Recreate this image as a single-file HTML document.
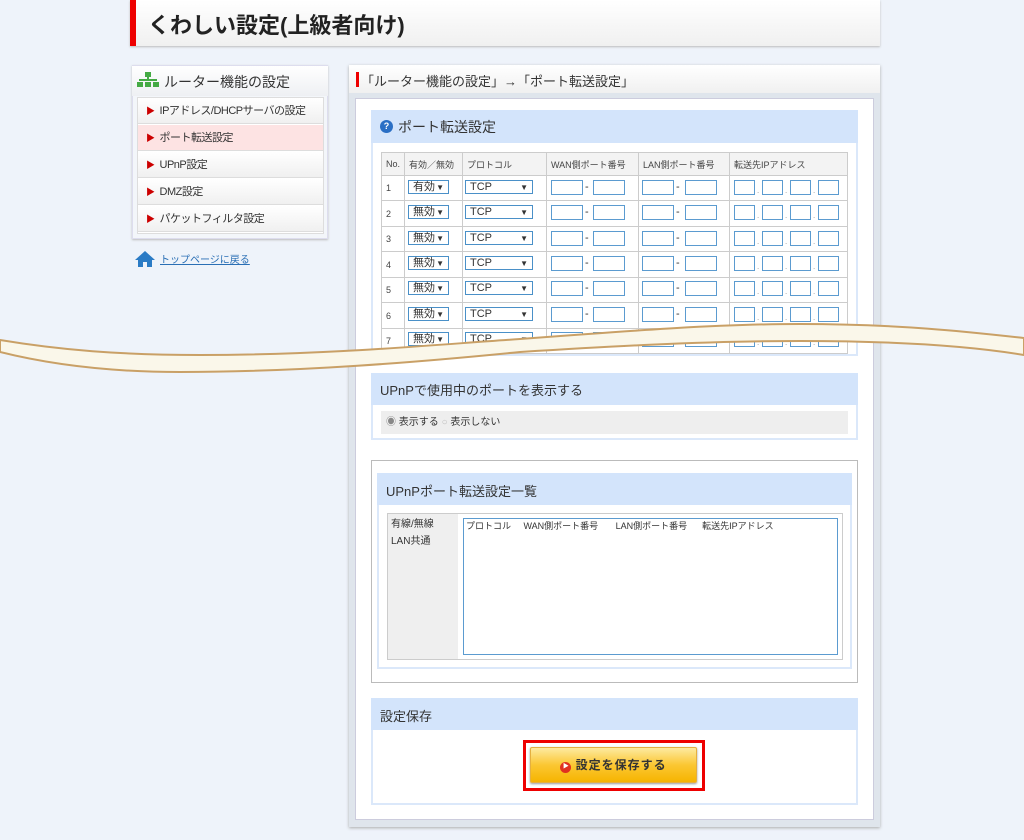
<!DOCTYPE html>
<html><head><meta charset="utf-8"><style>
*{margin:0;padding:0;box-sizing:border-box}
body{width:1024px;height:840px;background:#eef3fa;font-family:"Liberation Sans","Noto Sans CJK JP",sans-serif;color:#333;position:relative;overflow:hidden}
.a{position:absolute}
.hdr{background:linear-gradient(#fff,#f0f0f0);box-shadow:0 1px 2px #bbb}
.blue{background:#d3e4fb}
.sel{position:absolute;height:14px;border:1px solid #4a90c8;background:#fff;font-size:11px;line-height:12px;padding-left:4px}
.sel:after{content:"▼";position:absolute;right:4px;font-size:8px;top:1px}
.in{position:absolute;height:15px;border:1px solid #5b9bd0;background:#fff}
.mi{position:absolute;left:138px;width:185px;height:26px;background:linear-gradient(#fff,#f0f0f0);border-bottom:1px solid #ddd;font-size:11px;line-height:26px;padding-left:8px;letter-spacing:-0.5px}
.mi b{color:#c00;font-size:9px;margin-right:5px}
td,th{border:1px solid #ccc;font-size:9px;font-weight:normal;text-align:left;padding-left:4px;color:#444}
</style></head><body>
<div class="a hdr" style="left:130px;top:0;width:750px;height:46px"></div>
<div class="a" style="left:130px;top:0;width:6px;height:46px;background:#e00"></div>
<div class="a" style="left:148px;top:8px;font-size:22px;font-weight:bold;color:#222">くわしい設定(上級者向け)</div>

<div class="a" style="left:132px;top:65px;width:196px;height:174px;background:#f3f6fa;border:1px solid #dde;box-shadow:0 1px 2px #bbb"></div>
<div class="a" style="left:132px;top:66px;width:196px;height:30px;background:linear-gradient(#fff,#eef0f3)"></div>
<svg class="a" style="left:137px;top:72px" width="22" height="16"><rect x="8" y="0" width="6" height="5" fill="#4a4"/><rect x="10" y="5" width="2" height="4" fill="#4a4"/><rect x="2" y="7" width="18" height="2" fill="#4a4"/><rect x="0" y="10" width="6" height="5" fill="#4a4"/><rect x="8" y="10" width="6" height="5" fill="#4a4"/><rect x="16" y="10" width="6" height="5" fill="#4a4"/></svg>
<div class="a" style="left:164px;top:72px;font-size:14px;color:#333">ルーター機能の設定</div>
<div class="a" style="left:137px;top:97px;width:187px;height:137px;background:#fff;border:1px solid #ddd"></div>
<div class="mi" style="top:98px"><b>▶</b>IPアドレス/DHCPサーバの設定</div>
<div class="mi" style="top:125px;background:#fde3e3"><b>▶</b>ポート転送設定</div>
<div class="mi" style="top:152px"><b>▶</b>UPnP設定</div>
<div class="mi" style="top:179px"><b>▶</b>DMZ設定</div>
<div class="mi" style="top:206px"><b>▶</b>パケットフィルタ設定</div>
<svg class="a" style="left:135px;top:250px" width="20" height="18"><path d="M10 1L0 10h3v7h5v-5h4v5h5v-7h3z" fill="#2a7bc5"/></svg>
<div class="a" style="left:160px;top:251px;font-size:10px;color:#2a6fb5;text-decoration:underline">トップページに戻る</div>

<div class="a" style="left:349px;top:65px;width:531px;height:762px;background:#dfe5ec;box-shadow:0 1px 3px #aaa"></div>
<div class="a hdr" style="left:349px;top:65px;width:531px;height:28px;box-shadow:none"></div>
<div class="a" style="left:356px;top:72px;width:3px;height:15px;background:#e00"></div>
<div class="a" style="left:361px;top:71px;font-size:13px">「ルーター機能の設定」→「ポート転送設定」</div>
<div class="a" style="left:355px;top:98px;width:519px;height:722px;background:#fff;border:1px solid #ccd"></div>

<div class="a" style="left:371px;top:110px;width:487px;height:246px;border:2px solid #dbe8fa;background:#fff"></div>
<div class="a blue" style="left:371px;top:110px;width:487px;height:33px"></div>
<div class="a" style="left:380px;top:120px;width:13px;height:13px;border-radius:50%;background:#2a6fc5;color:#fff;font-size:9px;text-align:center;line-height:13px;font-weight:bold">?</div>
<div class="a" style="left:398px;top:117px;font-size:14px">ポート転送設定</div>
<table class="a" style="left:381px;top:152px;width:467px;border-collapse:collapse">
<tr style="height:23px;background:#f3f3f3"><th style="width:23px">No.</th><th style="width:58px">有効／無効</th><th style="width:84px">プロトコル</th><th style="width:92px">WAN側ポート番号</th><th style="width:91px">LAN側ポート番号</th><th>転送先IPアドレス</th></tr>
<tr style="height:25px"><td>1</td><td></td><td></td><td></td><td></td><td></td></tr>
<tr style="height:26px"><td>2</td><td></td><td></td><td></td><td></td><td></td></tr>
<tr style="height:25px"><td>3</td><td></td><td></td><td></td><td></td><td></td></tr>
<tr style="height:26px"><td>4</td><td></td><td></td><td></td><td></td><td></td></tr>
<tr style="height:25px"><td>5</td><td></td><td></td><td></td><td></td><td></td></tr>
<tr style="height:26px"><td>6</td><td></td><td></td><td></td><td></td><td></td></tr>
<tr style="height:25px"><td>7</td><td></td><td></td><td></td><td></td><td></td></tr>
</table>
<div id="rows"></div>
<script>
var h='',ys=[180,205,231,256,281,307,332];
ys.forEach(function(y,i){
h+='<div class="sel" style="left:408px;top:'+y+'px;width:41px">'+(i==0?'有効':'無効')+'</div>';
h+='<div class="sel" style="left:465px;top:'+y+'px;width:68px">TCP</div>';
[[551,593],[642,685]].forEach(function(p){h+='<div class="in" style="left:'+p[0]+'px;top:'+y+'px;width:32px"></div><div class="a" style="left:'+(p[0]+34)+'px;top:'+(y+1)+'px;font-size:11px">-</div><div class="in" style="left:'+p[1]+'px;top:'+y+'px;width:32px"></div>';});
[734,762,790,818].forEach(function(x,j){h+='<div class="in" style="left:'+x+'px;top:'+y+'px;width:21px"></div>';if(j<3)h+='<div class="a" style="left:'+(x+23)+'px;top:'+(y+6)+'px;font-size:8px;color:#999">.</div>';});
});
document.getElementById('rows').innerHTML=h;
</script>

<svg class="a" style="left:0;top:300px" width="1024" height="80"><path d="M0 40 C60 50,120 55,200 55 C330 55,430 45,520 39 C640 30,720 24,800 24 C900 24,970 32,1024 38 L1024 55 C970 46,900 41,800 41 C700 41,600 47,520 52 C420 62,300 72,180 72 C100 72,40 62,0 52Z" fill="#faf7ea" stroke="#c9a066" stroke-width="2"/></svg>

<div class="a" style="left:371px;top:373px;width:487px;height:67px;border:2px solid #dbe8fa;background:#fff"></div>
<div class="a blue" style="left:371px;top:373px;width:487px;height:32px"></div>
<div class="a" style="left:380px;top:380px;font-size:13px">UPnPで使用中のポートを表示する</div>
<div class="a" style="left:381px;top:411px;width:467px;height:23px;background:#eee;font-size:10px;line-height:23px;padding-left:5px"><span style="color:#888">◉</span> 表示する <span style="color:#bbb">○</span> 表示しない</div>

<div class="a" style="left:371px;top:460px;width:487px;height:223px;border:1px solid #bbb;background:#fff"></div>
<div class="a" style="left:377px;top:473px;width:475px;height:196px;border:2px solid #dbe8fa;background:#fff"></div>
<div class="a blue" style="left:377px;top:473px;width:475px;height:32px"></div>
<div class="a" style="left:386px;top:481px;font-size:13px">UPnPポート転送設定一覧</div>
<div class="a" style="left:387px;top:513px;width:456px;height:147px;border:1px solid #ccc;background:#fff"></div>
<div class="a" style="left:388px;top:514px;width:70px;height:145px;background:#efefef;font-size:10px;line-height:17px;padding:2px 3px">有線/無線<br>LAN共通</div>
<div class="a" style="left:463px;top:518px;width:375px;height:137px;border:1px solid #5b9bd0;font-size:9px;padding-left:2px;white-space:pre">プロトコル     WAN側ポート番号       LAN側ポート番号      転送先IPアドレス</div>

<div class="a" style="left:371px;top:698px;width:487px;height:107px;border:2px solid #dbe8fa;background:#fff"></div>
<div class="a blue" style="left:371px;top:698px;width:487px;height:32px"></div>
<div class="a" style="left:380px;top:706px;font-size:13px">設定保存</div>
<div class="a" style="left:523px;top:740px;width:182px;height:51px;border:3px solid #e00"></div>
<div class="a" style="left:530px;top:747px;width:167px;height:36px;background:linear-gradient(#fdeaa0,#fbc732 50%,#f6b400);border:1px solid #e5b040;border-radius:2px;box-shadow:0 1px 2px #999;font-size:12px;font-weight:bold;line-height:34px;text-align:center;letter-spacing:1px;color:#333"><span style="display:inline-block;width:11px;height:11px;border-radius:50%;background:#e03020;color:#fff;font-size:6px;line-height:11px;vertical-align:1px;letter-spacing:0">▶</span> 設定を保存する</div>
</body></html>
